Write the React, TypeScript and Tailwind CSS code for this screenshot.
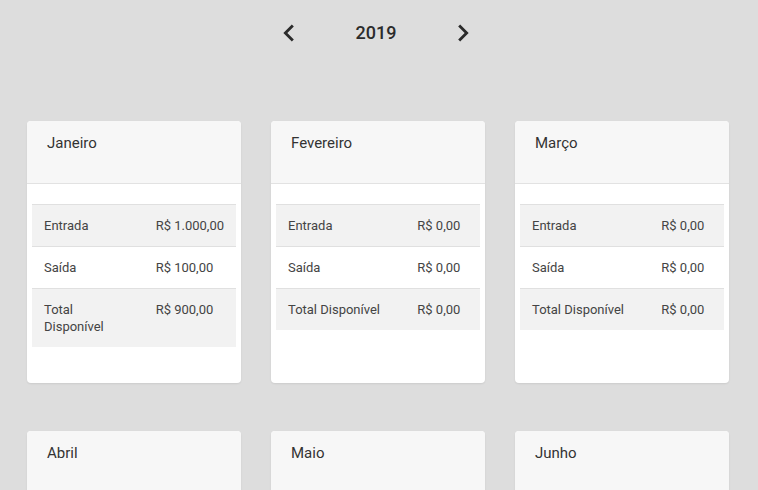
import React from "react";

type Row = { label: string; value: string };

// valores formatados com espaço não separável (igual ao Intl)
const brl = (v: string) => `R$\u00a0${v}`;

const months: { name: string; rows: Row[] }[] = [
  {
    name: "Janeiro",
    rows: [
      { label: "Entrada", value: brl("1.000,00") },
      { label: "Saída", value: brl("100,00") },
      { label: "Total Disponível", value: brl("900,00") },
    ],
  },
  {
    name: "Fevereiro",
    rows: [
      { label: "Entrada", value: brl("0,00") },
      { label: "Saída", value: brl("0,00") },
      { label: "Total Disponível", value: brl("0,00") },
    ],
  },
  {
    name: "Março",
    rows: [
      { label: "Entrada", value: brl("0,00") },
      { label: "Saída", value: brl("0,00") },
      { label: "Total Disponível", value: brl("0,00") },
    ],
  },
  { name: "Abril", rows: [] },
  { name: "Maio", rows: [] },
  { name: "Junho", rows: [] },
];

function Chevron({ dir }: { dir: "left" | "right" }) {
  return (
    <svg width="34" height="34" viewBox="0 0 24 24" fill="#2b2b2b">
      {dir === "left" ? (
        <path d="M15.41 7.41 14 6l-6 6 6 6 1.41-1.41L10.83 12z" />
      ) : (
        <path d="M10 6 8.59 7.41 13.17 12l-4.58 4.59L10 18l6-6z" />
      )}
    </svg>
  );
}

function MonthCard({ name, rows }: { name: string; rows: Row[] }) {
  return (
    <div className="rounded bg-white overflow-hidden shadow-[0_1px_2px_rgba(0,0,0,0.08)]">
      <div className="h-[63px] bg-[#f7f7f7] border-b border-[#e2e2e2] px-5 pt-[12px] text-[15px] leading-5 text-[#333]">
        {name}
      </div>
      <div className="px-[5px] pt-[20px] pb-[36px]">
        <table className="w-full border-collapse text-[13px] leading-[17px] text-[#444]">
          <tbody>
            {rows.map((r, i) => (
              <tr
                key={r.label}
                className={`border-t border-[#e0e0e0] ${i % 2 === 0 ? "bg-[#f2f2f2]" : "bg-white"}`}
              >
                <td className="p-3 align-top text-left">{r.label}</td>
                <td className="p-3 align-top text-left">{r.value}</td>
              </tr>
            ))}
          </tbody>
        </table>
      </div>
    </div>
  );
}

export default function App() {
  return (
    <div
      className="h-[490px] overflow-hidden bg-[#dddddd]"
      style={{ fontFamily: "Roboto, 'Liberation Sans', sans-serif" }}
    >
      <div className="flex items-center justify-center pt-[16px] h-[50px] pr-[6px]">
        <button className="flex">
          <Chevron dir="left" />
        </button>
        <span className="mx-[50px] mb-[2px] text-[18px] font-medium text-[#2b2b2b]">2019</span>
        <button className="flex">
          <Chevron dir="right" />
        </button>
      </div>
      <div className="grid grid-cols-[repeat(3,214px)] gap-x-[30px] gap-y-[48px] px-[27px] pt-[71px]">
        {months.map((m) => (
          <MonthCard key={m.name} name={m.name} rows={m.rows} />
        ))}
      </div>
    </div>
  );
}
